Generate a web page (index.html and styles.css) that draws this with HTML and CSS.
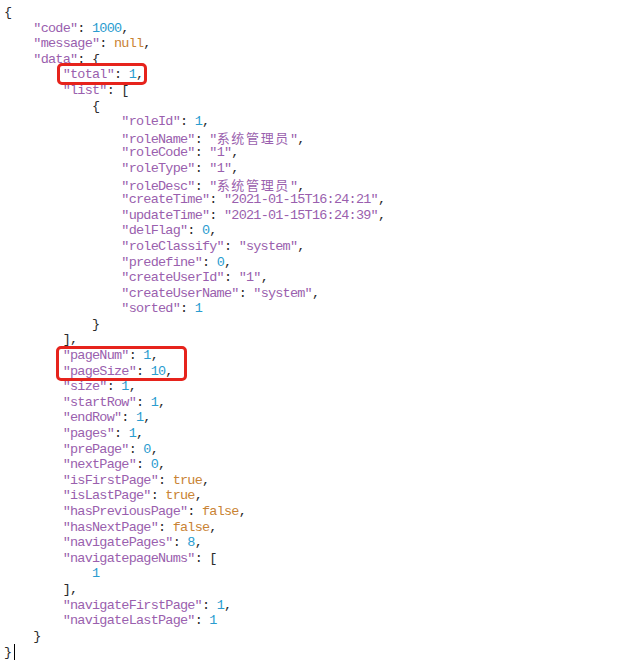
FILE: index.html
```html
<!DOCTYPE html>
<html lang="zh">
<head>
<meta charset="utf-8">
<title>JSON</title>
<link rel="stylesheet" href="styles.css">
</head>
<body>
<div class="json">
<div class="ln">{</div>
<div class="ln">    <span class="k">"code"</span>: <span class="n">1000</span>,</div>
<div class="ln">    <span class="k">"message"</span>: <span class="b">null</span>,</div>
<div class="ln">    <span class="k">"data"</span>: {</div>
<div class="ln">        <span class="k">"total"</span>: <span class="n">1</span>,</div>
<div class="ln">        <span class="k">"list"</span>: [</div>
<div class="ln">            {</div>
<div class="ln">                <span class="k">"roleId"</span>: <span class="n">1</span>,</div>
<div class="ln">                <span class="k">"roleName"</span>: <span class="s">"</span><span class="c">系统管理员</span><span class="s">"</span>,</div>
<div class="ln">                <span class="k">"roleCode"</span>: <span class="s">"1"</span>,</div>
<div class="ln">                <span class="k">"roleType"</span>: <span class="s">"1"</span>,</div>
<div class="ln">                <span class="k">"roleDesc"</span>: <span class="s">"</span><span class="c">系统管理员</span><span class="s">"</span>,</div>
<div class="ln">                <span class="k">"createTime"</span>: <span class="s">"2021-01-15T16:24:21"</span>,</div>
<div class="ln">                <span class="k">"updateTime"</span>: <span class="s">"2021-01-15T16:24:39"</span>,</div>
<div class="ln">                <span class="k">"delFlag"</span>: <span class="n">0</span>,</div>
<div class="ln">                <span class="k">"roleClassify"</span>: <span class="s">"system"</span>,</div>
<div class="ln">                <span class="k">"predefine"</span>: <span class="n">0</span>,</div>
<div class="ln">                <span class="k">"createUserId"</span>: <span class="s">"1"</span>,</div>
<div class="ln">                <span class="k">"createUserName"</span>: <span class="s">"system"</span>,</div>
<div class="ln">                <span class="k">"sorted"</span>: <span class="n">1</span></div>
<div class="ln">            }</div>
<div class="ln">        ],</div>
<div class="ln">        <span class="k">"pageNum"</span>: <span class="n">1</span>,</div>
<div class="ln">        <span class="k">"pageSize"</span>: <span class="n">10</span>,</div>
<div class="ln">        <span class="k">"size"</span>: <span class="n">1</span>,</div>
<div class="ln">        <span class="k">"startRow"</span>: <span class="n">1</span>,</div>
<div class="ln">        <span class="k">"endRow"</span>: <span class="n">1</span>,</div>
<div class="ln">        <span class="k">"pages"</span>: <span class="n">1</span>,</div>
<div class="ln">        <span class="k">"prePage"</span>: <span class="n">0</span>,</div>
<div class="ln">        <span class="k">"nextPage"</span>: <span class="n">0</span>,</div>
<div class="ln">        <span class="k">"isFirstPage"</span>: <span class="b">true</span>,</div>
<div class="ln">        <span class="k">"isLastPage"</span>: <span class="b">true</span>,</div>
<div class="ln">        <span class="k">"hasPreviousPage"</span>: <span class="b">false</span>,</div>
<div class="ln">        <span class="k">"hasNextPage"</span>: <span class="b">false</span>,</div>
<div class="ln">        <span class="k">"navigatePages"</span>: <span class="n">8</span>,</div>
<div class="ln">        <span class="k">"navigatepageNums"</span>: [</div>
<div class="ln">            <span class="n">1</span></div>
<div class="ln">        ],</div>
<div class="ln">        <span class="k">"navigateFirstPage"</span>: <span class="n">1</span>,</div>
<div class="ln">        <span class="k">"navigateLastPage"</span>: <span class="n">1</span></div>
<div class="ln">    }</div>
<div class="ln">}<span class="caret"></span></div>
</div>
<div class="mark mark-total"></div>
<div class="mark mark-page"></div>
</body>
</html>
```

FILE: styles.css
```css
html, body {
  margin: 0;
  padding: 0;
  background: #ffffff;
}

body {
  position: relative;
  width: 640px;
  height: 666px;
  overflow: hidden;
}

.json {
  padding: 5px 0 0 4px;
  font-family: "Liberation Mono", "DejaVu Sans Mono", monospace;
  font-size: 13.5px;
  letter-spacing: -0.77px;
  line-height: 15.6px;
  color: #2b2b2b;
}

.ln {
  white-space: pre;
  height: 15.6px;
}

.k, .s {
  color: #9a5fae;
}

.n {
  color: #2a9ccf;
}

.b {
  color: #c98334;
}

.c {
  color: #9a5fae;
  font-family: "Noto Sans CJK SC", sans-serif;
  font-size: 13px;
  letter-spacing: 1.66px;
}

.caret {
  display: inline-block;
  width: 1px;
  height: 16px;
  margin-left: 3px;
  background: #000000;
  vertical-align: -4px;
}

.mark {
  position: absolute;
  border: 3px solid #e6231c;
  border-radius: 5px;
  box-sizing: border-box;
}

.mark-total {
  left: 57px;
  top: 63px;
  width: 90px;
  height: 22px;
}

.mark-page {
  left: 56px;
  top: 346px;
  width: 131px;
  height: 35px;
}
```
